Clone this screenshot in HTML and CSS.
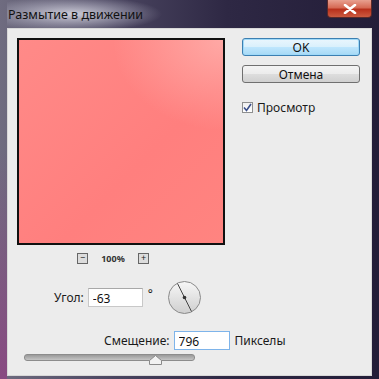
FILE: index.html
```html
<!DOCTYPE html>
<html lang="ru">
<head>
    <meta charset="UTF-8">
    <title>Размытие в движении</title>
    <link rel="stylesheet" href="styles.css">
</head>
<body>
    <div class="window">
        <!-- Title bar -->
        <div class="titlebar">
            <span class="title">Размытие в движении</span>
            <div class="close-btn">
                <svg width="14" height="10" viewBox="0 0 14 10">
                    <path d="M2 1 L12 9 M12 1 L2 9" stroke="#fff" stroke-width="2.6" stroke-linecap="round"/>
                </svg>
            </div>
        </div>

        <div class="client">
            <div class="top">
                <div class="preview-col">
                    <div class="preview"></div>
                    <div class="zoom-row">
                        <span class="zoom-box">&minus;</span>
                        <span class="zoom-value">100%</span>
                        <span class="zoom-box">+</span>
                    </div>
                </div>

                <div class="buttons">
                    <button class="btn btn-ok">OK</button>
                    <button class="btn">Отмена</button>
                    <label class="check">
                        <span class="check-box">
                            <svg width="9" height="9" viewBox="0 0 9 9">
                                <path d="M1 4.5 L3.5 7.5 L8 1" fill="none" stroke="#3a4f8a" stroke-width="1.6"/>
                            </svg>
                        </span>
                        Просмотр
                    </label>
                </div>
            </div>

            <div class="angle-row">
                <span class="label">Угол:</span>
                <input class="field" type="text" value="-63">
                <span class="degree">&deg;</span>
                <svg class="dial" width="35" height="35" viewBox="0 0 35 35">
                    <defs>
                        <linearGradient id="dialFill" x1="0" y1="0" x2="0" y2="1">
                            <stop offset="0" stop-color="#f7f7f7"/>
                            <stop offset="1" stop-color="#cfcfcf"/>
                        </linearGradient>
                    </defs>
                    <circle cx="17.5" cy="17.5" r="16" fill="url(#dialFill)" stroke="#8a8a8a" stroke-width="1"/>
                    <line x1="10.5" y1="3.5" x2="24.5" y2="31.5" stroke="#444" stroke-width="1"/>
                    <circle cx="17.5" cy="17.5" r="1.8" fill="#333"/>
                </svg>
            </div>

            <div class="offset-row">
                <span class="label">Смещение:</span>
                <input class="field field-focus" type="text" value="796">
                <span class="unit">Пикселы</span>
            </div>

            <div class="slider">
                <div class="track"></div>
                <svg class="thumb" width="13" height="10" viewBox="0 0 13 10">
                    <path d="M0.5 9.5 L0.5 5.5 L6.5 0.5 L12.5 5.5 L12.5 9.5 Z" fill="#f2f2f2" stroke="#8a8a8a"/>
                </svg>
            </div>
        </div>
    </div>
</body>
</html>
```

FILE: styles.css
```css
body {
    margin: 0;
    font-family: "Noto Sans", "Open Sans", sans-serif;
    font-size: 12px;
    color: #1a1a1a;
}

.window {
    width: 379px;
    height: 379px;
    box-sizing: border-box;
    padding: 0 7px 3px 7px;
    display: flex;
    flex-direction: column;
    background:
        linear-gradient(to bottom, rgba(0,0,0,0) 40%, rgba(140,70,130,0.9)) left / 7px 100% no-repeat,
        linear-gradient(to right, #6f6c80 0%, #4a4560 30%, #2e2844 60%, #231d38 100%);
}

.titlebar {
    height: 28px;
    display: flex;
    justify-content: space-between;
    align-items: flex-start;
    background: radial-gradient(ellipse 90px 18px at 65px 14px, rgba(225,225,235,0.85), rgba(200,200,215,0.4) 60%, rgba(0,0,0,0) 100%);
}

.title {
    margin: 6px 0 0 1px;
    font-size: 12.5px;
    color: #111;
}

.close-btn {
    width: 45px;
    height: 18px;
    border: 1px solid #5a2a2a;
    border-top: none;
    border-radius: 0 0 4px 4px;
    box-sizing: border-box;
    display: flex;
    align-items: center;
    justify-content: center;
    background: linear-gradient(to bottom, #e8a090 0%, #d66a55 45%, #b8301c 55%, #cc5a40 100%);
}

.client {
    flex: 1;
    background: #ececec;
    border: 1px solid #d8d8d8;
    box-sizing: border-box;
    padding-top: 9px;
}

.top {
    display: flex;
}

.preview-col {
    margin-left: 9px;
    width: 208px;
}

.preview {
    height: 207px;
    box-sizing: border-box;
    border: 2px solid #111;
    background:
        radial-gradient(ellipse 110px 90px at 100% 0%, rgba(255,195,190,0.6), rgba(255,195,190,0) 100%),
        linear-gradient(135deg, #ff8a88 0%, #ff7f7e 60%, #ff8480 100%);
}

.zoom-row {
    display: flex;
    align-items: center;
    height: 10px;
    margin-top: 8px;
    padding-left: 60px;
}

.zoom-box {
    width: 9px;
    height: 9px;
    border: 1px solid #666;
    background: #dcdcdc;
    font-size: 9px;
    line-height: 8px;
    text-align: center;
    color: #222;
}

.zoom-value {
    width: 50px;
    text-align: center;
    font-size: 9px;
    font-weight: bold;
    color: #333;
}

.buttons {
    margin-left: 17px;
    width: 118px;
    display: flex;
    flex-direction: column;
}

.btn {
    height: 18px;
    margin-bottom: 9px;
    padding: 0;
    font-family: inherit;
    font-size: 12px;
    color: #111;
    border: 1px solid #707070;
    border-radius: 3px;
    background: linear-gradient(to bottom, #f4f4f4 0%, #ebebeb 50%, #dddddd 51%, #d0d0d0 100%);
}

.btn-ok {
    border-color: #3c7fb1;
    background: linear-gradient(to bottom, #eaf6fd 0%, #d9f0fc 50%, #bee6fd 51%, #a7d9f5 100%);
    box-shadow: inset 0 0 0 1px #9fd9f8;
}

.check {
    display: flex;
    align-items: center;
    margin-top: 9px;
    height: 13px;
}

.check-box {
    width: 11px;
    height: 11px;
    box-sizing: border-box;
    border: 1px solid #8e8f8f;
    background: linear-gradient(to bottom, #f0f0f0, #ffffff);
    margin-right: 4px;
    display: flex;
    align-items: center;
    justify-content: center;
}

.angle-row {
    display: flex;
    align-items: center;
    margin-top: 17px;
    padding-left: 46px;
    height: 35px;
}

.label {
    margin-right: 4px;
}

.field {
    width: 55px;
    height: 19px;
    box-sizing: border-box;
    border: 1px solid #c8c8c8;
    border-top-color: #a8a8a8;
    background: #fff;
    font-family: inherit;
    font-size: 12px;
    padding: 1px 4px 0;
    color: #111;
}

.field-focus {
    width: 56px;
    border-color: #7eb4ea;
}

.degree {
    margin: -8px 0 0 5px;
    font-size: 12px;
}

.dial {
    margin-left: 14px;
}

.offset-row {
    display: flex;
    align-items: center;
    margin-top: 16px;
    padding-left: 96px;
}

.unit {
    margin-left: 5px;
}

.slider {
    position: relative;
    margin: 4px 0 0 16px;
    width: 171px;
    height: 12px;
}

.track {
    margin-top: 3px;
    height: 5px;
    border-radius: 3px;
    background: linear-gradient(to bottom, #9a9a9a, #c4c4c4);
    border: 1px solid #8c8c8c;
}

.thumb {
    position: absolute;
    left: 125px;
    top: 1px;
}
```
